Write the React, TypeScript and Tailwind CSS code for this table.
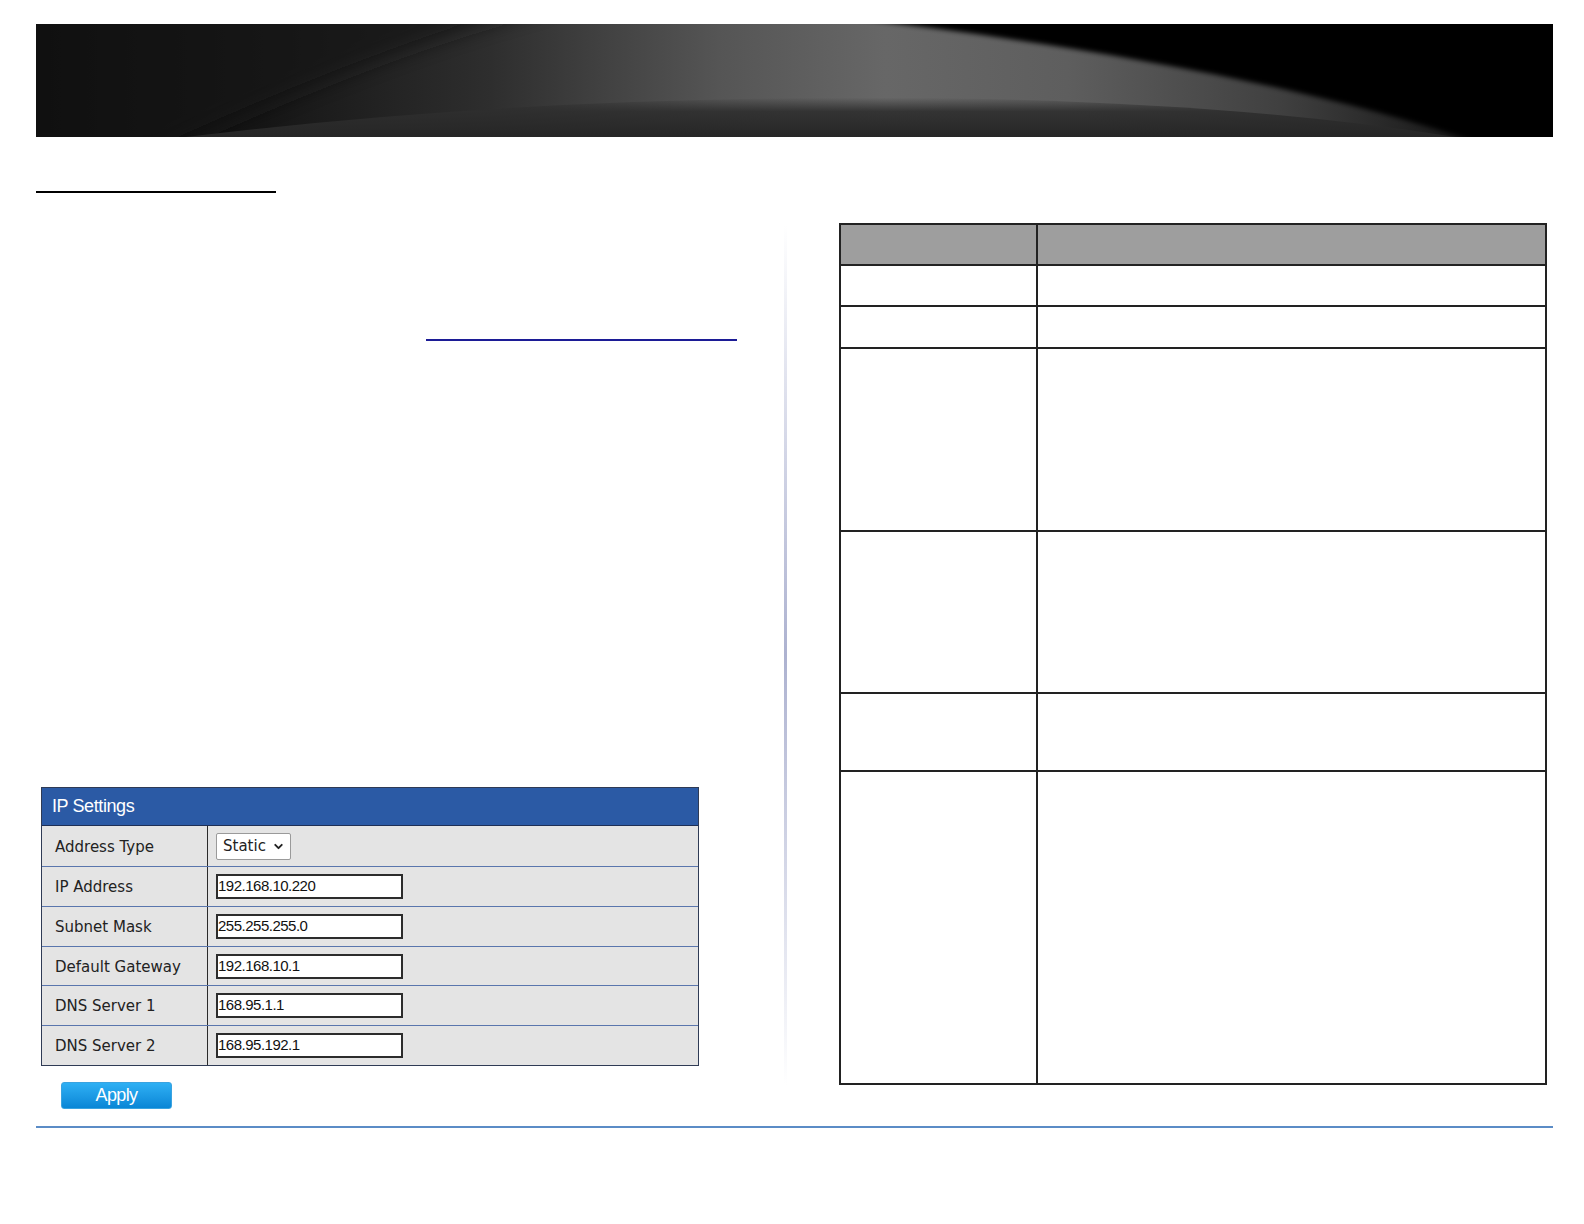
import { ChevronDown } from 'lucide-react';

const ipRows = [
  { label: 'Address Type', value: null, h: 41 },
  { label: 'IP Address', value: '192.168.10.220', h: 40 },
  { label: 'Subnet Mask', value: '255.255.255.0', h: 40 },
  { label: 'Default Gateway', value: '192.168.10.1', h: 39 },
  { label: 'DNS Server 1', value: '168.95.1.1', h: 40 },
  { label: 'DNS Server 2', value: '168.95.192.1', h: 39 },
];

// heights of the rows of the parameter table below its header
const tableRows = [41, 42, 183, 162, 78, 313];

function Banner() {
  return (
    <svg width="1517" height="113" viewBox="0 0 1517 113" className="block">
      <defs>
        <linearGradient id="base" x1="0" y1="0" x2="1" y2="0">
          <stop offset="0" stopColor="#040404" />
          <stop offset="0.15" stopColor="#161616" />
          <stop offset="0.3" stopColor="#2e2e2e" />
          <stop offset="0.45" stopColor="#555555" />
          <stop offset="0.56" stopColor="#676767" />
          <stop offset="0.68" stopColor="#5e5e5e" />
          <stop offset="0.82" stopColor="#404040" />
          <stop offset="0.92" stopColor="#1e1e1e" />
          <stop offset="1" stopColor="#060606" />
        </linearGradient>
        <linearGradient id="band" x1="0" y1="0" x2="0" y2="1">
          <stop offset="0" stopColor="#2e2e2e" stopOpacity="0" />
          <stop offset="0.35" stopColor="#2e2e2e" stopOpacity="0.9" />
          <stop offset="1" stopColor="#262626" stopOpacity="1" />
        </linearGradient>
        <filter id="soft" x="-10%" y="-50%" width="120%" height="200%">
          <feGaussianBlur stdDeviation="2.5" />
        </filter>
        <filter id="softer" x="-10%" y="-50%" width="120%" height="200%">
          <feGaussianBlur stdDeviation="10" />
        </filter>
      </defs>
      <rect width="1517" height="113" fill="url(#base)" />
      {/* dark upper left */}
      <path d="M-20 -20 L520 -20 Q360 20 120 130 L-20 130 Z" fill="#141414" opacity="0.7" filter="url(#softer)" />
      {/* dark lower band */}
      <path d="M150 113 Q500 70 900 74 Q1200 78 1420 113 Z" fill="url(#band)" />
      {/* black top right */}
      <path d="M690 -20 C940 5 1250 50 1460 125 L1540 135 L1540 -20 Z" fill="#060606" filter="url(#soft)" />
    </svg>
  );
}

function IpSettings() {
  return (
    <div className="w-[658px] border border-[#2f3b55] bg-[#e4e4e4]">
      <div className="h-[38px] bg-[#2b5aa5] flex items-center pl-[10px] border-b border-[#1e2f55]">
        <span className="text-white text-[18px] tracking-[-0.4px] font-['Liberation_Sans',Arial,sans-serif]">IP Settings</span>
      </div>
      {ipRows.map((r, i) => (
        <div
          key={r.label}
          className={`flex ${i < ipRows.length - 1 ? 'border-b border-[#5a76ad]' : ''}`}
          style={{ height: r.h }}
        >
          <div className="w-[166px] shrink-0 border-r border-[#2a2a2a] flex items-center pl-[13px] pt-[2px] text-[15px] text-[#222] font-['DejaVu_Sans',Verdana,sans-serif]">
            {r.label}
          </div>
          <div className="flex items-center pl-[8px]">
            {r.value === null ? (
              <div className="w-[75px] h-[27px] bg-white border border-[#9a9a9a] rounded-[2px] flex items-center justify-between pl-[6px] pr-[5px] text-[15px] text-[#222] font-['DejaVu_Sans',Verdana,sans-serif]">
                Static
                <ChevronDown size={13} strokeWidth={3.5} className="text-[#222]" />
              </div>
            ) : (
              <div className="w-[187px] h-[25px] bg-white border-2 border-[#2c2c2c] flex items-center text-[15px] tracking-[-0.5px] text-[#111] font-['Liberation_Sans',Arial,sans-serif]">
                {r.value}
              </div>
            )}
          </div>
        </div>
      ))}
    </div>
  );
}

export default function App() {
  return (
    <div className="w-[1584px] h-[1224px] bg-white overflow-hidden">
      {/* Banner */}
      <div className="ml-[36px] pt-[24px]">
        <Banner />
      </div>

      <div className="flex items-start pl-[36px]">
        {/* Left column */}
        <div className="w-[748px] shrink-0 flex flex-col">
          <div className="mt-[54px] w-[240px] h-[2px] bg-black" />
          <div className="mt-[146px] ml-[390px] w-[311px] h-[2px] bg-[#1c1c96]" />
          <div className="mt-[446px] ml-[5px]">
            <IpSettings />
          </div>
          <button className="mt-[16px] ml-[25px] w-[111px] h-[27px] rounded-[3px] bg-gradient-to-b from-[#2eb0f4] to-[#0886d6] border border-[#3aa3e0] text-white text-[18px] tracking-[-0.6px] font-['Liberation_Sans',Arial,sans-serif] flex items-center justify-center">
            Apply
          </button>
        </div>

        {/* Divider */}
        <div className="mt-[88px] w-[3px] h-[860px] bg-gradient-to-b from-[#ffffff] via-[#adb2d0] to-[#ffffff]" />

        {/* Parameter table */}
        <div className="mt-[86px] ml-[52px] w-[708px] border-[2.5px] border-[#222]">
          <div className="h-[39px] grid grid-cols-[197px_1fr] bg-[#9e9e9e]">
            <div className="border-r-2 border-[#222]" />
            <div />
          </div>
          {tableRows.map((h, i) => (
            <div
              key={i}
              className="grid grid-cols-[197px_1fr] border-t-2 border-[#222]"
              style={{ height: h }}
            >
              <div className="border-r-2 border-[#222]" />
              <div />
            </div>
          ))}
        </div>
      </div>

      {/* Footer rule */}
      <div className="ml-[36px] mt-[17px] w-[1517px] h-[2px] bg-[#5b8cc6]" />
    </div>
  );
}
